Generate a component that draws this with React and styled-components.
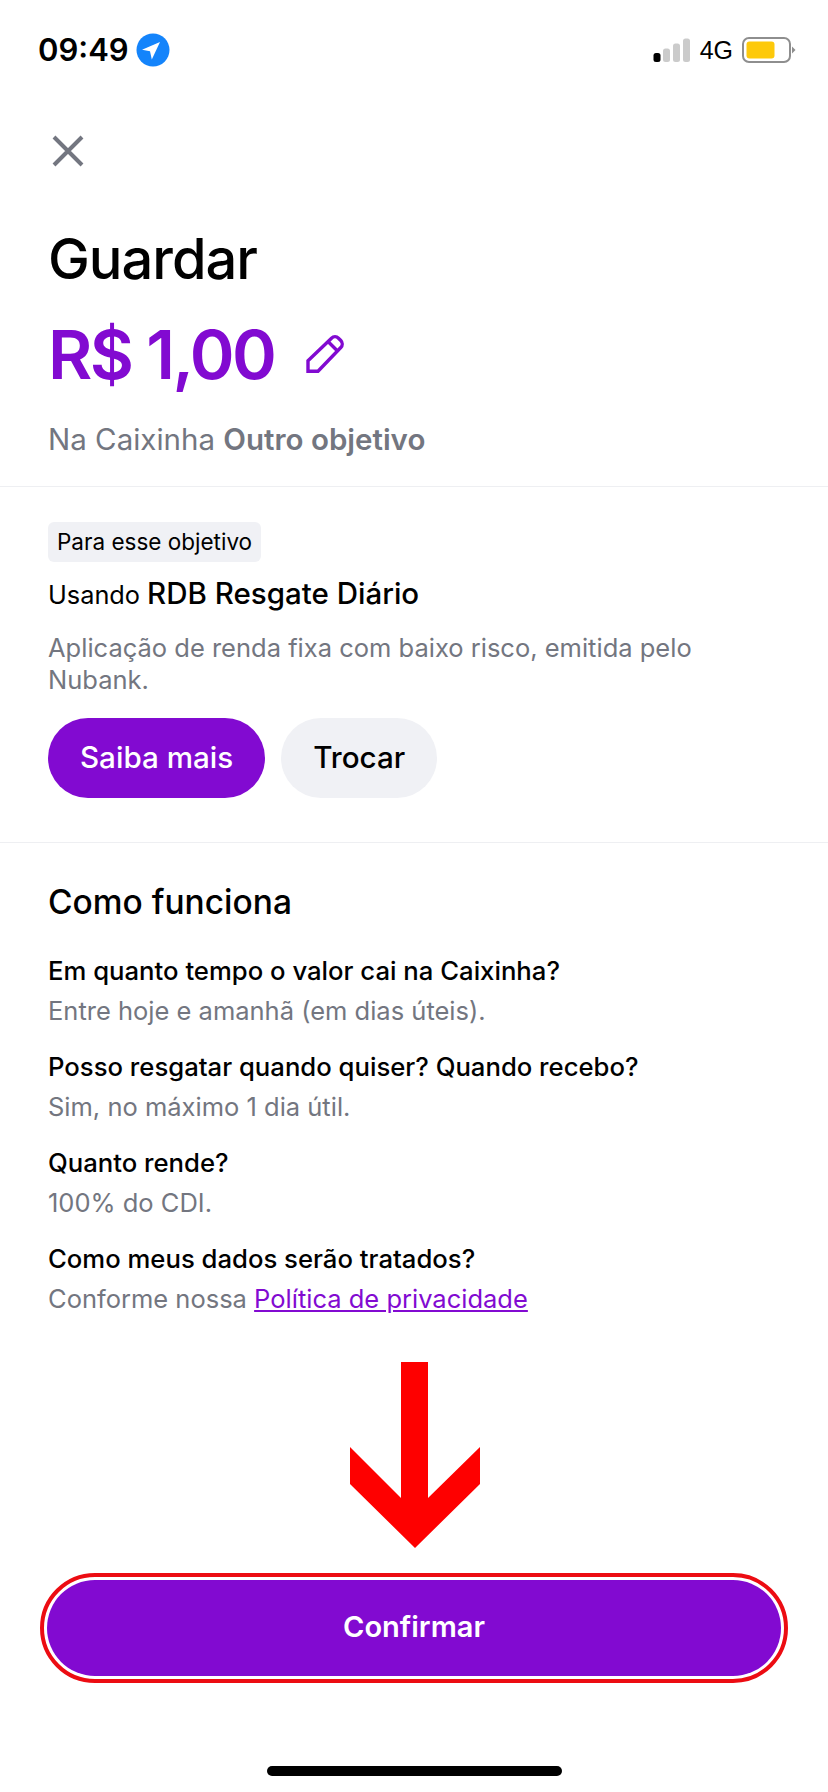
import React from "react";
import styled, { createGlobalStyle } from "styled-components";

const Global = createGlobalStyle`
  html, body { margin: 0; padding: 0; background: #fff; }
  * { box-sizing: border-box; }
  body { font-family: Inter, "Liberation Sans", sans-serif; -webkit-font-smoothing: antialiased; }
`;

const Page = styled.div`
  position: relative;
  width: 828px;
  height: 1792px;
  display: flex;
  flex-direction: column;
  background: #fff;
  overflow: hidden;
`;
const StatusBar = styled.div`
  height: 100px;
  padding: 33px 32px 0 38px;
  display: flex;
  justify-content: space-between;
  align-items: flex-start;
`;
const StatusGroup = styled.div`
  display: flex;
  align-items: center;
  height: 34px;
  gap: ${p => p.$gap || 6}px;
`;
const Time = styled.span`
  font: 600 31px/34px Inter, sans-serif;
  color: #000;
`;
const Network = styled.span`
  font: 400 25px/34px "Liberation Sans", sans-serif;
  color: #000;
`;
const Header = styled.div`
  padding: 34px 48px 0;
`;
const CloseBtn = styled.div`
  width: 34px;
  height: 34px;
  margin-left: 3px;
  color: #737680;
`;
const Title = styled.h1`
  margin: 59px 0 0;
  font: 500 56px/64px Inter, sans-serif;
  letter-spacing: -1px;
  color: #000;
`;
const AmountRow = styled.div`
  margin-top: 25px;
  display: flex;
  align-items: center;
  gap: 32px;
`;
const Amount = styled.div`
  font: 600 68px/76px Inter, sans-serif;
  letter-spacing: -2.5px;
  color: #820ad1;
`;
const Sub = styled.div`
  margin-top: 30px;
  font: 400 29.5px/34px Inter, sans-serif;
  color: #737680;
  strong { font-weight: 600; }
`;
const Section = styled.section`
  border-top: 1px solid #eeeff2;
  padding: ${p => p.$pad || "35px 48px 0"};
  margin-top: ${p => p.$mt || 0}px;
`;
const Tag = styled.div`
  width: fit-content;
  height: 40px;
  padding: 0 9px;
  border-radius: 6px;
  background: #f0f1f5;
  font: 400 22.5px/40px Inter, sans-serif;
  color: #000;
`;
const Using = styled.div`
  margin-top: 14px;
  font: 400 25.3px/34px Inter, sans-serif;
  color: #000;
  strong { font-weight: 500; font-size: 29.5px; }
`;
const Desc = styled.p`
  margin: 20px 0 0;
  font: 400 25.5px/32px Inter, sans-serif;
  color: #737680;
`;
const Buttons = styled.div`
  margin-top: 22px;
  display: flex;
  gap: 16px;
`;
const Pill = styled.div`
  height: 80px;
  padding: 0 32px;
  border-radius: 40px;
  display: flex;
  align-items: center;
  font: 500 29.6px/1 Inter, sans-serif;
  background: ${p => (p.$primary ? "#820ad1" : "#f0f1f5")};
  color: ${p => (p.$primary ? "#fff" : "#000")};
`;
const SectionTitle = styled.h2`
  margin: 0;
  font: 500 33.5px/40px Inter, sans-serif;
  color: #000;
`;
const Faq = styled.div`
  margin-top: ${p => p.$mt || 22}px;
`;
const Question = styled.div`
  font: 500 25.7px/34px Inter, sans-serif;
  color: #000;
`;
const Answer = styled.div`
  margin-top: 6px;
  font: 400 25.5px/34px Inter, sans-serif;
  color: #737680;
  a { color: #820ad1; text-decoration: underline; }
`;
const ArrowMark = styled.svg`
  position: absolute;
  left: 350px;
  top: 1362px;
`;
const ConfirmRing = styled.div`
  position: absolute;
  left: 40px;
  top: 1573px;
  width: 748px;
  height: 110px;
  padding: 3px;
  border: 4px solid #ec0c12;
  border-radius: 55px;
  display: flex;
`;
const Confirm = styled.div`
  flex: 1;
  padding-bottom: 4px;
  border-radius: 48px;
  background: #820ad1;
  color: #fff;
  display: flex;
  align-items: center;
  justify-content: center;
  font: 600 29px/1 Inter, sans-serif;
`;
const HomeBar = styled.div`
  position: absolute;
  left: 267px;
  top: 1766px;
  width: 295px;
  height: 10px;
  border-radius: 5px;
  background: #000;
`;

const LocationIcon = () => (
  <svg width="34" height="34" viewBox="0 0 34 34">
    <circle cx="17" cy="17" r="16.5" fill="#1484fb" />
    <path d="M24 9 L6 16.7 L14 18.3 L15.8 26.5 Z" fill="#fff" />
  </svg>
);
const SignalIcon = () => (
  <svg width="38" height="24" viewBox="0 0 38 24">
    <rect x="0.5" y="15" width="7" height="9" rx="2.5" fill="#000" />
    <rect x="10" y="10.5" width="7" height="13.5" rx="2.5" fill="#cbcbcb" />
    <rect x="20" y="5.5" width="7" height="18.5" rx="2.5" fill="#cbcbcb" />
    <rect x="30" y="0.5" width="7" height="23.5" rx="2.5" fill="#cbcbcb" />
  </svg>
);
const BatteryIcon = () => (
  <svg width="54" height="26" viewBox="0 0 54 26">
    <rect x="1" y="1" width="47" height="24" rx="6" fill="#fff" stroke="#8e8e8e" strokeWidth="2" />
    <rect x="4.5" y="4.5" width="28" height="17" rx="3" fill="#fdc90b" />
    <path d="M50 9.5 L53.5 13 L50 16.5 Z" fill="#8e8e8e" />
  </svg>
);
const PencilIcon = () => (
  <svg width="38" height="38" viewBox="0 0 38 38" fill="none" stroke="#820ad1" strokeWidth="3.4">
    <path d="M2 36.2 V25.8 L25.5 3.2 a5 5 0 0 1 7 0 l2.3 2.3 a5 5 0 0 1 0 7 L12 36.2 Z" />
    <path d="M22 6.5 L31.5 16" />
  </svg>
);

export default function App() {
  return (
    <Page>
      <Global />
      <StatusBar>
        <StatusGroup $gap={7}>
          <Time>09:49</Time>
          <LocationIcon />
        </StatusGroup>
        <StatusGroup $gap={9}>
          <SignalIcon />
          <Network>4G</Network>
          <BatteryIcon />
        </StatusGroup>
      </StatusBar>
      <Header>
        <CloseBtn>
          <svg width="34" height="34" viewBox="0 0 34 34" stroke="currentColor" strokeWidth="4" fill="none">
            <path d="M3 3 L31 31 M31 3 L3 31" />
          </svg>
        </CloseBtn>
        <Title>Guardar</Title>
        <AmountRow>
          <Amount>R$ 1,00</Amount>
          <PencilIcon />
        </AmountRow>
        <Sub>Na Caixinha <strong>Outro objetivo</strong></Sub>
      </Header>
      <Section $mt={30}>
        <Tag>Para esse objetivo</Tag>
        <Using>Usando <strong>RDB Resgate Diário</strong></Using>
        <Desc>Aplicação de renda fixa com baixo risco, emitida pelo<br />Nubank.</Desc>
        <Buttons>
          <Pill $primary>Saiba mais</Pill>
          <Pill>Trocar</Pill>
        </Buttons>
      </Section>
      <Section $mt={44} $pad="39px 48px 0">
        <SectionTitle>Como funciona</SectionTitle>
        <Faq $mt={32}>
          <Question>Em quanto tempo o valor cai na Caixinha?</Question>
          <Answer>Entre hoje e amanhã (em dias úteis).</Answer>
        </Faq>
        <Faq>
          <Question>Posso resgatar quando quiser? Quando recebo?</Question>
          <Answer>Sim, no máximo 1 dia útil.</Answer>
        </Faq>
        <Faq>
          <Question>Quanto rende?</Question>
          <Answer>100% do CDI.</Answer>
        </Faq>
        <Faq>
          <Question>Como meus dados serão tratados?</Question>
          <Answer>Conforme nossa <a href="#p">Política de privacidade</a></Answer>
        </Faq>
      </Section>
      <ArrowMark width="130" height="187" viewBox="0 0 130 187">
        <path d="M51 0 H78 V136 L130 85 V122 L65 186 L0 122 V85 L51 136 Z" fill="#fe0000" />
      </ArrowMark>
      <ConfirmRing><Confirm>Confirmar</Confirm></ConfirmRing>
      <HomeBar />
    </Page>
  );
}
